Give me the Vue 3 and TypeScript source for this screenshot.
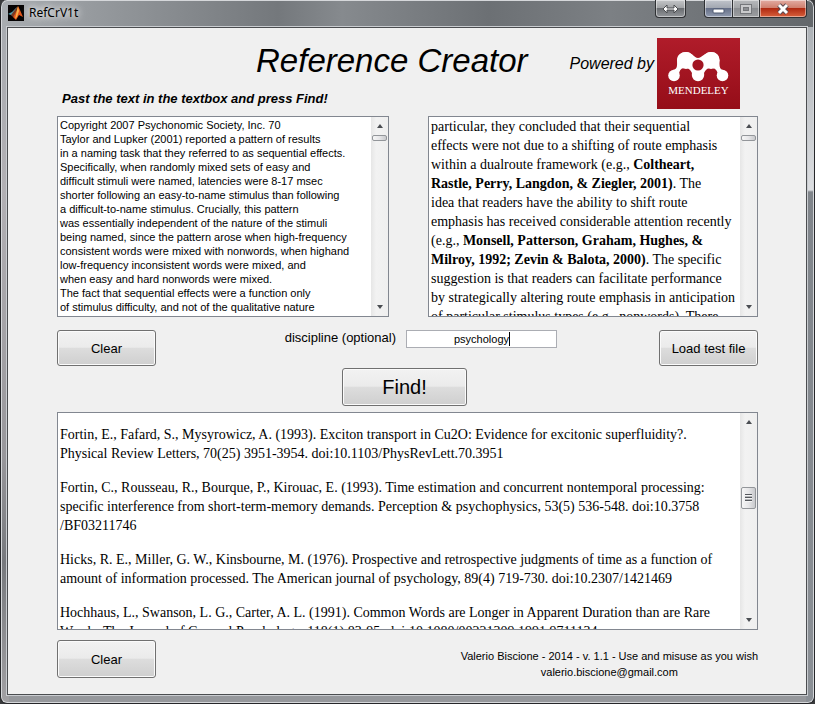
<script setup lang="ts">
import { ref } from 'vue'

interface Run {
  text: string
  bold?: boolean
}

const initialSource = `Copyright 2007 Psychonomic Society, Inc. 70
Taylor and Lupker (2001) reported a pattern of results
in a naming task that they referred to as sequential effects.
Specifically, when randomly mixed sets of easy and
difficult stimuli were named, latencies were 8-17 msec
shorter following an easy-to-name stimulus than following
a difficult-to-name stimulus. Crucially, this pattern
was essentially independent of the nature of the stimuli
being named, since the pattern arose when high-frequency
consistent words were mixed with nonwords, when highand
low-frequency inconsistent words were mixed, and
when easy and hard nonwords were mixed.
The fact that sequential effects were a function only
of stimulus difficulty, and not of the qualitative nature`

const source = ref(initialSource)
const discipline = ref('psychology')

const annotated: Run[][] = [
  [{ text: 'particular, they concluded that their sequential' }],
  [{ text: 'effects were not due to a shifting of route emphasis' }],
  [{ text: 'within a dualroute framework (e.g., ' }, { text: 'Coltheart,', bold: true }],
  [{ text: 'Rastle, Perry, Langdon, & Ziegler, 2001)', bold: true }, { text: '. The' }],
  [{ text: 'idea that readers have the ability to shift route' }],
  [{ text: 'emphasis has received considerable attention recently' }],
  [{ text: '(e.g., ' }, { text: 'Monsell, Patterson, Graham, Hughes, &', bold: true }],
  [{ text: 'Milroy, 1992; Zevin & Balota, 2000)', bold: true }, { text: '. The specific' }],
  [{ text: 'suggestion is that readers can facilitate performance' }],
  [{ text: 'by strategically altering route emphasis in anticipation' }],
  [{ text: 'of particular stimulus types (e.g., nonwords). There' }],
]

const references = ref<string[][]>([
  [
    'Fortin, E., Fafard, S., Mysyrowicz, A. (1993). Exciton transport in Cu2O: Evidence for excitonic superfluidity?.',
    'Physical Review Letters, 70(25) 3951-3954. doi:10.1103/PhysRevLett.70.3951',
  ],
  [
    'Fortin, C., Rousseau, R., Bourque, P., Kirouac, E. (1993). Time estimation and concurrent nontemporal processing:',
    'specific interference from short-term-memory demands. Perception & psychophysics, 53(5) 536-548. doi:10.3758',
    '/BF03211746',
  ],
  [
    'Hicks, R. E., Miller, G. W., Kinsbourne, M. (1976). Prospective and retrospective judgments of time as a function of',
    'amount of information processed. The American journal of psychology, 89(4) 719-730. doi:10.2307/1421469',
  ],
  [
    'Hochhaus, L., Swanson, L. G., Carter, A. L. (1991). Common Words are Longer in Apparent Duration than are Rare',
    'Words. The Journal of General Psychology, 118(1) 83-95. doi:10.1080/00221309.1991.9711134',
  ],
])
</script>

<template>
  <div class="window">
    <header class="titlebar">
      <svg class="app-icon" viewBox="0 0 16 16" aria-hidden="true">
        <rect width="16" height="16" fill="#050303" />
        <path d="M0 9 L4 7 L7 4 L9 2 L7 8 L5 11 L3 10 Z" fill="#4f9fae" />
        <path d="M3 10 L6 6 L9 2 L8 8 L5 12 Z" fill="#7a3a22" />
        <path d="M5 12 L8 7 L10 1 L12 5 L15 12 L11 10 L8 15 Z" fill="#e2551b" />
        <path d="M9 5 L10 1 L11 6 L9 12 L7 14 Z" fill="#f8b04a" />
      </svg>
      <span class="caption">RefCrV1t</span>
      <button class="chrome swap" type="button" aria-label="Switch display">
        <svg viewBox="0 0 17 10" width="17" height="10">
          <path d="M1 5 L5 1 V4 H12 V1 L16 5 L12 9 V6 H5 V9 Z" fill="#fff" stroke="#4b4d50" stroke-width="1" />
        </svg>
      </button>
      <div class="chrome-group">
        <button class="chrome min" type="button" aria-label="Minimize">
          <svg viewBox="0 0 13 10" width="13" height="10">
            <rect x="1" y="5" width="11" height="4" rx="1" fill="#fff" stroke="#4f5a73" />
          </svg>
        </button>
        <button class="chrome max" type="button" aria-label="Maximize">
          <svg viewBox="0 0 12 10" width="12" height="10">
            <path d="M2 2 H10 V8 H2 Z" fill="none" stroke="#75777b" stroke-width="4" />
            <path d="M2 2 H10 V8 H2 Z" fill="none" stroke="#c9cacc" stroke-width="2" />
          </svg>
        </button>
        <button class="chrome close" type="button" aria-label="Close">
          <svg viewBox="0 0 14 12" width="14" height="12">
            <path d="M3 2 L11 10 M11 2 L3 10" stroke="#5a4a52" stroke-width="5" />
            <path d="M3 2 L11 10 M11 2 L3 10" stroke="#fff" stroke-width="3" />
          </svg>
        </button>
      </div>
    </header>

    <main class="client">
      <section class="head">
        <div class="head-text">
          <h1>Reference Creator</h1>
          <label class="hint" for="source">Past the text in the textbox and press Find!</label>
        </div>
        <span class="powered">Powered by</span>
        <svg class="logo" viewBox="0 0 83 71" role="img" aria-label="Mendeley">
          <defs>
            <linearGradient id="red" x1="0" y1="0" x2="0" y2="1">
              <stop offset="0" stop-color="#b01c2a" />
              <stop offset="1" stop-color="#950d18" />
            </linearGradient>
          </defs>
          <rect width="83" height="71" fill="url(#red)" />
          <path
            fill="#fff"
            d="M20 22 C20 17 24 14 29 14 C35 14 37 20 41 20 C45 20 48 14 54 14 C59 14 62.500 17 62.500 22 C62.500 27 62 31 66 32 L61 36 C59 28 50 28 47 35 L35 35 C32 28 23 28 22 36 L16 32 C21 31 20 27 20 22 Z"
          />
          <circle cx="29" cy="22.500" r="8.500" fill="#fff" />
          <circle cx="54" cy="22.500" r="8.500" fill="#fff" />
          <circle cx="17" cy="37.500" r="5.800" fill="#fff" />
          <circle cx="41" cy="37" r="6.200" fill="#fff" />
          <circle cx="65.500" cy="37.500" r="5.800" fill="#fff" />
          <circle cx="41" cy="27" r="5.600" fill="#a21522" />
          <text x="41.500" y="56" text-anchor="middle" class="logo-text">MENDELEY</text>
        </svg>
      </section>

      <section class="panes">
        <div class="pane">
          <textarea id="source" v-model="source" class="source" wrap="off" spellcheck="false"></textarea>
          <div class="scrollbar" aria-hidden="true">
            <span class="arrow up"></span>
            <span class="thumb short"></span>
            <span class="arrow down"></span>
          </div>
        </div>
        <div class="pane">
          <div class="document">
            <div v-for="(line, i) in annotated" :key="i" class="line">
              <template v-for="(run, j) in line" :key="j"><b v-if="run.bold">{{ run.text }}</b><template v-else>{{ run.text }}</template></template>
            </div>
          </div>
          <div class="scrollbar" aria-hidden="true">
            <span class="arrow up"></span>
            <span class="thumb short"></span>
            <span class="arrow down"></span>
          </div>
        </div>
      </section>

      <section class="controls">
        <button class="btn" type="button" @click="source = ''">Clear</button>
        <div class="field">
          <label for="discipline">discipline (optional)</label>
          <div class="entry">
            <input id="discipline" v-model="discipline" type="text" size="1" />
            <span class="caret" aria-hidden="true"></span>
          </div>
        </div>
        <button class="btn" type="button" @click="source = initialSource">Load test file</button>
      </section>

      <div class="find-row">
        <button class="btn find" type="button">Find!</button>
      </div>

      <section class="pane results">
        <div class="document">
          <div v-for="(entry, i) in references" :key="i" class="entry-block">
            <div v-for="line in entry" :key="line" class="line">{{ line }}</div>
          </div>
        </div>
        <div class="scrollbar" aria-hidden="true">
          <span class="arrow up"></span>
          <span class="thumb grip"></span>
          <span class="arrow down"></span>
        </div>
      </section>

      <footer class="foot">
        <button class="btn" type="button" @click="references = []">Clear</button>
        <p class="credit">
          Valerio Biscione - 2014 - v. 1.1 - Use and misuse as you wish<br />valerio.biscione@gmail.com
        </p>
      </footer>
    </main>
  </div>
</template>

<style>
body {
  background: #3a3b3d;
}
</style>

<style scoped>
.window {
  box-sizing: border-box;
  min-height: 100vh;
  padding: 0 7px 8px 6px;
  display: flex;
  flex-direction: column;
  font-family: "Liberation Sans", Arial, sans-serif;
  color: #000;
  border: solid #26272a;
  border-width: 0 1px 1px;
  border-radius: 7px;
  background:
    linear-gradient(90deg, #a9adb1, #989ca0 10%, #74787c 34%, #868a8e 42%, #6c7074 60%, #7c8084 75%, #63676b) 0 0 / 100% 27px no-repeat,
    linear-gradient(#a6abb0, #dcdee1 190px, #80858b 192px, #8b9096) right / 8px 100% no-repeat,
    linear-gradient(#a7abb0, #b2b0b4 190px, #98979b 65%, #77797d 80%, #a2a1a4) left / 8px 100% no-repeat,
    #96989c;
  box-shadow: inset 0 0 0 1px #d5d7da;
}

.titlebar {
  display: flex;
  align-items: flex-start;
  height: 27px;
  padding-left: 1px;
}

.app-icon {
  width: 16px;
  height: 16px;
  margin-top: 5px;
}

.caption {
  flex: 1;
  padding-left: 5px;
  line-height: 25px;
  font-family: "Noto Sans", sans-serif;
  font-size: 12px;
  text-shadow: 0 0 6px #fff, 0 0 10px #fff;
}

.chrome {
  box-sizing: border-box;
  height: 18px;
  padding: 0;
  display: grid;
  place-items: center;
  border: 1px solid #2f3134;
  border-top: 0;
  background: linear-gradient(#c4c6c8, #a2a4a7 45%, #6a6d71 50%, #94979b);
  box-shadow: inset 0 0 0 1px rgb(255 255 255 / 45%);
}

.swap {
  width: 31px;
  margin-right: 18px;
  border-radius: 0 0 4px 4px;
}

.chrome-group {
  display: flex;
}

.min {
  width: 29px;
  border-radius: 0 0 0 4px;
  background: linear-gradient(#c0c4cb, #a3a8b2 45%, #667088 50%, #919bb0);
}

.max {
  width: 27px;
  border-left: 0;
  background: linear-gradient(#b8babd, #a2a4a7 45%, #8b8d91 50%, #9b9da0);
}

.close {
  width: 47px;
  border-left: 0;
  border-radius: 0 0 4px 0;
  background: linear-gradient(#e3aca3, #d0806f 45%, #b02a12 50%, #d8603c);
}

.client {
  flex: 1;
  padding: 10px 48px 8px 49px;
  border: 1px solid #4b4d50;
  background: #f0f0f0;
  box-shadow: 0 0 0 1px #c9ccd0;
}

.head {
  display: flex;
  align-items: flex-start;
  padding-right: 18px;
}

.head-text {
  flex: 1;
  display: flex;
  flex-direction: column;
  padding: 2px 42px 0 5px;
}

h1 {
  margin: 0;
  line-height: 42px;
  text-align: right;
  font-size: 33px;
  font-weight: 400;
  font-style: italic;
}

.hint {
  padding-top: 7px;
  line-height: 20px;
  font-size: 13px;
  font-weight: 700;
  font-style: italic;
}

.powered {
  line-height: 52px;
  font-size: 16px;
  font-style: italic;
}

.logo {
  width: 83px;
  height: 71px;
  margin-left: 3px;
}

.logo-text {
  font-family: "Liberation Serif", serif;
  font-size: 11px;
  fill: #fff;
}

.panes {
  display: grid;
  grid-template-columns: 332fr 330fr;
  gap: 39px;
  margin-top: 7px;
}

.pane {
  box-sizing: border-box;
  min-width: 0;
  height: 201px;
  display: flex;
  border: 1px solid #828790;
  background: #fff;
}

.source {
  flex: 1;
  min-width: 0;
  padding: 1px 2px;
  border: 0;
  outline: 0;
  resize: none;
  overflow: hidden;
  background: transparent;
  color: #000;
  font: 11px/14px "Liberation Sans", Arial, sans-serif;
  white-space: pre;
}

.document {
  flex: 1;
  min-width: 0;
  padding: 0 2px;
  overflow: hidden;
  font: 14px/19px "Liberation Serif", "Times New Roman", serif;
}

.line {
  white-space: pre;
}

.scrollbar {
  width: 17px;
  display: flex;
  flex-direction: column;
  align-items: center;
  background: linear-gradient(90deg, #e6e6e6, #f2f2f2 30%, #efefef);
}

.arrow {
  width: 17px;
  height: 18px;
  display: grid;
  place-items: center;
}

.arrow::before {
  content: "";
  border: 3px solid transparent;
}

.up::before {
  border-top: 0;
  border-bottom: 4px solid #4a4d52;
}

.down {
  margin-top: auto;
}

.down::before {
  border-bottom: 0;
  border-top: 4px solid #4a4d52;
}

.thumb {
  box-sizing: border-box;
  width: 15px;
  border: 1px solid #93969a;
  border-radius: 2px;
  background: linear-gradient(90deg, #f6f6f6, #e6e6e8 50%, #c9cacd);
}

.short {
  height: 6px;
}

.grip {
  height: 22px;
  margin-top: 56px;
  display: grid;
  place-items: center;
}

.grip::before {
  content: "";
  width: 7px;
  height: 8px;
  background: repeating-linear-gradient(#55585d 0 1px, #f4f4f4 1px 2px, #b5b7ba 2px 3px);
}

.controls {
  display: flex;
  align-items: flex-start;
  margin-top: 13px;
}

.btn {
  box-sizing: border-box;
  width: 99px;
  height: 36px;
  padding: 0;
  border: 1px solid #707070;
  border-radius: 3px;
  background: linear-gradient(#f2f2f2, #ebebeb 48%, #dddddd 50%, #cfcfcf);
  box-shadow: inset 0 0 0 1px #fbfbfb;
  color: #000;
  font: 13px "Liberation Sans", Arial, sans-serif;
}

.field {
  display: flex;
  gap: 10px;
  margin: 0 102px 0 auto;
  line-height: 16px;
  font-size: 13px;
}

.entry {
  position: relative;
  width: 151px;
}

.entry input {
  box-sizing: border-box;
  width: 100%;
  height: 18px;
  padding: 0;
  display: block;
  border: 1px solid #abadb3;
  outline: 0;
  background: #fff;
  color: #000;
  text-align: center;
  font: 11px "Liberation Sans", Arial, sans-serif;
}

.caret {
  position: absolute;
  top: 2px;
  left: 103px;
  width: 1px;
  height: 14px;
  background: #000;
}

.find-row {
  display: flex;
  justify-content: center;
  margin: 2px 0 6px;
  padding-right: 6px;
}

.find {
  width: 125px;
  height: 38px;
  font-size: 20px;
}

.results {
  height: 218px;
}

.results .document {
  padding-top: 12px;
}

.entry-block {
  margin-bottom: 15px;
}

.foot {
  display: flex;
  justify-content: space-between;
  align-items: flex-start;
  margin-top: 10px;
}

.foot .btn {
  height: 38px;
}

.credit {
  margin: 8px 0 0;
  line-height: 16px;
  text-align: center;
  font-size: 11px;
}
</style>
